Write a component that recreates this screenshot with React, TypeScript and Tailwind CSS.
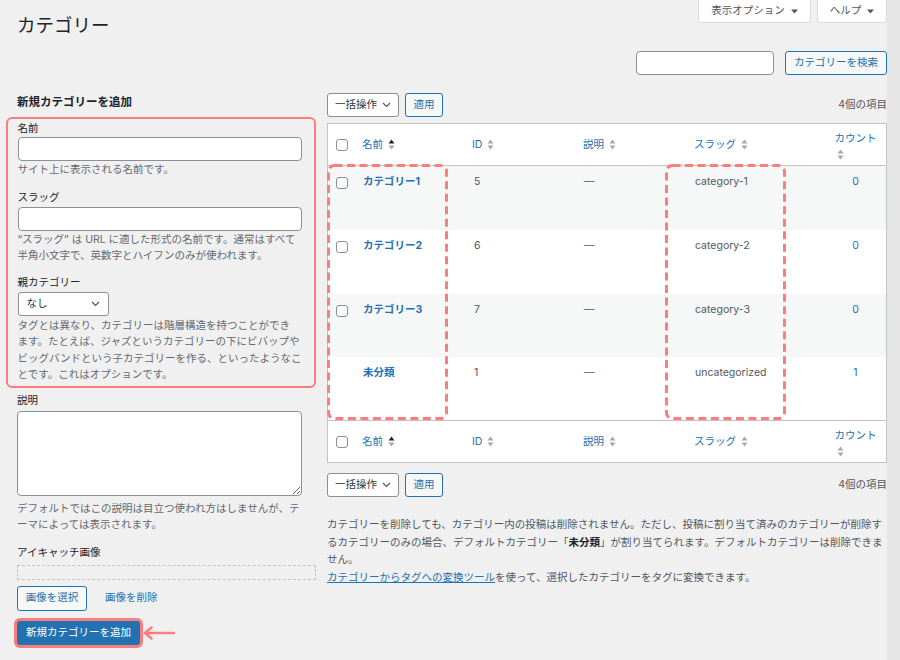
import React from "react";

const RED = "#fb7d7d";

function Sort({ up }: { up?: boolean }) {
  return (
    <svg width="7" height="11" viewBox="0 0 7 11" className="shrink-0">
      <path d="M0.5 4.5 L3.5 0.5 L6.5 4.5 Z" fill={up ? "#1d2327" : "#a7aaad"} />
      <path d="M0.5 6.5 L6.5 6.5 L3.5 10.5 Z" fill="#a7aaad" />
    </svg>
  );
}

function Box() {
  return <span className="block w-[12px] h-[12px] rounded-[3px] border border-[#8c8f94] bg-white" />;
}

function Caret() {
  return (
    <svg width="7" height="5" viewBox="0 0 7 5">
      <path d="M0 0.5 H7 L3.5 4.5 Z" fill="#50575e" />
    </svg>
  );
}

function Chevron() {
  return (
    <svg width="9" height="6" viewBox="0 0 9 6">
      <path d="M1 1 L4.5 4.5 L8 1" fill="none" stroke="#50575e" strokeWidth="1.2" />
    </svg>
  );
}

function HeadRow() {
  return (
    <div className="flex h-[41px] text-[#2271b1]">
      <div className="w-[34px] pl-[8px] flex items-center">
        <Box />
      </div>
      <div className="w-[110px] flex items-center gap-[5px]">
        名前 <Sort up />
      </div>
      <div className="w-[111px] flex items-center gap-[5px]">
        ID <Sort />
      </div>
      <div className="w-[111px] flex items-center gap-[5px]">
        説明 <Sort />
      </div>
      <div className="w-[131px] flex items-center gap-[5px]">
        スラッグ <Sort />
      </div>
      <div className="w-[61px] pt-[7.5px]">
        <div className="text-center leading-[14px]">カウント</div>
        <div className="pl-[12px] mt-[3px] flex">
          <Sort />
        </div>
      </div>
    </div>
  );
}

function BulkBar() {
  return (
    <div className="flex items-center h-[24px]">
      <div className="w-[72px] h-[24px] flex items-center justify-between pl-[7px] pr-[7px] bg-white border border-[#8c8f94] rounded-[3px] text-[#2c3338]">
        一括操作
        <Chevron />
      </div>
      <div className="ml-[6px] w-[38px] h-[24px] flex items-center justify-center bg-[#f6f7f7] border border-[#2271b1] rounded-[3px] text-[#2271b1]">
        適用
      </div>
      <div className="ml-auto text-[#50575e]">4個の項目</div>
    </div>
  );
}

function DashBox({ className }: { className: string }) {
  return (
    <svg className={className} width="121" height="256" viewBox="0 0 121 256">
      <rect x="1.5" y="1.5" width="118" height="253" rx="6" fill="none" stroke={RED} strokeWidth="3" strokeDasharray="8 4.5" />
    </svg>
  );
}

const rows = [
  { name: "カテゴリー1", id: "5", slug: "category-1", count: "0", check: true, cls: "h-[64px] bg-[#f6f7f7]" },
  { name: "カテゴリー2", id: "6", slug: "category-2", count: "0", check: true, cls: "h-[64px] bg-white" },
  { name: "カテゴリー3", id: "7", slug: "category-3", count: "0", check: true, cls: "h-[63px] bg-[#f6f7f7]" },
  { name: "未分類", id: "1", slug: "uncategorized", count: "1", check: false, cls: "h-[63px] bg-white" },
];

export default function App() {
  return (
    <div className="w-[900px] h-[660px] overflow-hidden flex bg-[#f0f0f1] text-[10.5px] leading-[14px] text-[#1d2327] font-['Inter','Noto_Sans_CJK_JP',sans-serif]">
      <div className="w-[887px] shrink-0 pl-[17px]">
        {/* Header */}
        <div className="flex justify-between h-[51px]">
          <h1 className="mt-[13px] text-[18.5px] leading-[24px] font-normal text-[#1d2327]">カテゴリー</h1>
          <div className="flex gap-[6px] h-[23px]">
            <div className="w-[113px] flex items-center justify-center gap-[6px] bg-white border border-t-0 border-[#dcdcde] rounded-b-[4px] text-[#50575e]">
              表示オプション <Caret />
            </div>
            <div className="w-[70px] flex items-center justify-center gap-[6px] bg-white border border-t-0 border-[#dcdcde] rounded-b-[4px] text-[#50575e]">
              ヘルプ <Caret />
            </div>
          </div>
        </div>
        <div className="flex justify-end items-center gap-[11px] h-[24px]">
          <input readOnly className="w-[138px] h-[24px] bg-white border border-[#8c8f94] rounded-[4px]" />
          <div className="w-[102px] h-[24px] flex items-center justify-center bg-[#f6f7f7] border border-[#2271b1] rounded-[3px] text-[#2271b1]">
            カテゴリーを検索
          </div>
        </div>

        <div className="mt-[18px] flex gap-[11px]">
          {/* Left column */}
          <div className="w-[299px] shrink-0">
            <h2 className="mt-[0.5px] text-[11.5px] leading-[16px] font-bold">新規カテゴリーを追加</h2>
            <div className="mt-[7.5px] -ml-[11px] w-[310px] border-[2.5px] border-[#fb7d7d] rounded-[6px] pl-[9.5px] pr-[11.5px] pt-[2.5px] pb-[2px]">
              <div>名前</div>
              <input readOnly className="mt-px block w-[284px] h-[24px] bg-white border border-[#8c8f94] rounded-[4px]" />
              <p className="mt-[1.5px] leading-[16px] text-[#646970]">サイト上に表示される名前です。</p>
              <div className="mt-[13px]">スラッグ</div>
              <input readOnly className="mt-[2px] block w-[284px] h-[24px] bg-white border border-[#8c8f94] rounded-[4px]" />
              <p className="mt-px leading-[16px] text-[#646970]">
                “スラッグ” は URL に適した形式の名前です。通常はすべて
                <br />
                半角小文字で、英数字とハイフンのみが使われます。
              </p>
              <div className="mt-[12px]">親カテゴリー</div>
              <div className="mt-[2px] w-[91px] h-[24px] flex items-center justify-between pl-[8px] pr-[8px] bg-white border border-[#8c8f94] rounded-[3px] text-[#2c3338]">
                なし
                <Chevron />
              </div>
              <p className="mt-[1.5px] leading-[16.5px] text-[#646970]">
                タグとは異なり、カテゴリーは階層構造を持つことができ
                <br />
                ます。たとえば、ジャズというカテゴリーの下にビバップや
                <br />
                ビッグバンドという子カテゴリーを作る、といったようなこ
                <br />
                とです。これはオプションです。
              </p>
            </div>
            <div className="mt-[6.5px]">説明</div>
            <textarea readOnly className="mt-[2.5px] block w-[285px] h-[85px] bg-white border border-[#8c8f94] rounded-[4px]" />
            <p className="mt-[5px] leading-[16px] text-[#646970]">
              デフォルトではこの説明は目立つ使われ方はしませんが、テ
              <br />
              ーマによっては表示されます。
            </p>
            <div className="mt-[13px]">アイキャッチ画像</div>
            <div className="mt-[5px] h-[15px] w-[299px] border border-dashed border-[#c3c4c7]" />
            <div className="mt-[6px] flex items-center gap-[18px]">
              <div className="w-[70px] h-[25px] flex items-center justify-center bg-[#f6f7f7] border border-[#2271b1] rounded-[3px] text-[#2271b1]">
                画像を選択
              </div>
              <span className="text-[#2271b1]">画像を削除</span>
            </div>
            <div className="mt-[10px] flex items-center">
              <div className="w-[123px] h-[24px] flex items-center justify-center bg-[#2271b1] rounded-[3px] text-white ring-[3px] ring-[#fb7d7d]">
                新規カテゴリーを追加
              </div>
              <svg className="ml-[3px]" width="32" height="14" viewBox="0 0 32 14">
                <path d="M2 7 H31" stroke={RED} strokeWidth="2.5" strokeLinecap="round" />
                <path d="M8.5 1.5 L2 7 L8.5 12.5" fill="none" stroke={RED} strokeWidth="2.5" strokeLinecap="round" strokeLinejoin="round" />
              </svg>
            </div>
          </div>

          {/* Right column */}
          <div className="flex-1">
            <BulkBar />
            <div className="mt-[6px] bg-white border border-[#c3c4c7]">
              <div className="border-b border-[#c3c4c7]">
                <HeadRow />
              </div>
              <div className="relative">
                {rows.map((r) => (
                  <div key={r.slug} className={`flex ${r.cls}`}>
                    <div className="w-[34px] pl-[8px] pt-[10.5px]">{r.check && <Box />}</div>
                    <div className="w-[110px] pt-[8.5px] pl-px font-bold text-[#2271b1]">{r.name}</div>
                    <div className="w-[111px] pt-[8.5px] pl-[2px] text-[#50575e]">{r.id}</div>
                    <div className="w-[111px] pt-[8.5px] pl-px text-[#50575e]">—</div>
                    <div className="w-[131px] pt-[8.5px] pl-px text-[#50575e]">{r.slug}</div>
                    <div className="w-[61px] pt-[8.5px] text-center text-[#2271b1]">{r.count}</div>
                  </div>
                ))}
                <DashBox className="absolute left-[-1px] top-[-2px] pointer-events-none" />
                <DashBox className="absolute left-[337px] top-[-2px] pointer-events-none" />
              </div>
              <div className="border-t border-[#c3c4c7]">
                <HeadRow />
              </div>
            </div>
            <div className="mt-[10px]">
              <BulkBar />
            </div>
            <p className="mt-[19px] leading-[17.5px] text-[#50575e]">
              カテゴリーを削除しても、カテゴリー内の投稿は削除されません。ただし、投稿に割り当て済みのカテゴリーが削除す
              <br />
              るカテゴリーのみの場合、デフォルトカテゴリー「<b className="text-[#1d2327]">未分類</b>」が割り当てられます。デフォルトカテゴリーは削除できま
              <br />
              せん。
            </p>
            <p className="leading-[17.5px] text-[#50575e]">
              <span className="text-[#2271b1] underline">カテゴリーからタグへの変換ツール</span>を使って、選択したカテゴリーをタグに変換できます。
            </p>
          </div>
        </div>
      </div>
      <div className="flex-1 bg-[#e6e6e6]" />
    </div>
  );
}
